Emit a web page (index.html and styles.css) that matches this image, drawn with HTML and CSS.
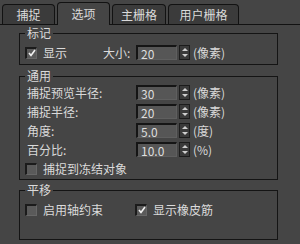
FILE: index.html
```html
<!DOCTYPE html>
<html lang="zh">
<head>
    <meta charset="utf-8" />
    <title>捕捉选项</title>
    <link rel="stylesheet" href="styles.css">
</head>
<body>
    <div class="tabs">
        <div class="tab">捕捉</div>
        <div class="tab active">选项</div>
        <div class="tab">主栅格</div>
        <div class="tab last">用户栅格</div>
    </div>

    <!-- 标记 -->
    <fieldset class="group g-mark">
        <legend>标记</legend>
        <div class="row">
            <label class="check wide-check"><span class="box"><svg width="8" height="8" viewBox="0 0 8 8"><path d="M1 4 L3 6.5 L7 1" fill="none" stroke="#f2f2f2" stroke-width="1.6"/></svg></span>显示</label>
            <span class="size-label">大小:</span>
            <span class="field">20</span>
            <span class="spin"><i class="up"></i><i class="down"></i></span>
            <span class="unit">(像素)</span>
        </div>
    </fieldset>

    <!-- 通用 -->
    <fieldset class="group g-common">
        <legend>通用</legend>
        <div class="rows">
            <div class="row">
                <span class="flabel">捕捉预览半径:</span>
                <span class="field">30</span>
                <span class="spin"><i class="up"></i><i class="down"></i></span>
                <span class="unit">(像素)</span>
            </div>
            <div class="row">
                <span class="flabel">捕捉半径:</span>
                <span class="field">20</span>
                <span class="spin"><i class="up"></i><i class="down"></i></span>
                <span class="unit">(像素)</span>
            </div>
            <div class="row">
                <span class="flabel">角度:</span>
                <span class="field">5.0</span>
                <span class="spin"><i class="up"></i><i class="down"></i></span>
                <span class="unit">(度)</span>
            </div>
            <div class="row">
                <span class="flabel">百分比:</span>
                <span class="field">10.0</span>
                <span class="spin"><i class="up"></i><i class="down"></i></span>
                <span class="unit">(%)</span>
            </div>
            <div class="row">
                <label class="check"><span class="box"></span>捕捉到冻结对象</label>
            </div>
        </div>
    </fieldset>

    <!-- 平移 -->
    <fieldset class="group g-move">
        <legend>平移</legend>
        <div class="row">
            <label class="check col-check"><span class="box"></span>启用轴约束</label>
            <label class="check"><span class="box"><svg width="8" height="8" viewBox="0 0 8 8"><path d="M1 4 L3 6.5 L7 1" fill="none" stroke="#f2f2f2" stroke-width="1.6"/></svg></span>显示橡皮筋</label>
        </div>
    </fieldset>
</body>
</html>
```

FILE: styles.css
```css
body {
    margin: 0;
    background: #454545;
    color: #dadada;
    font-family: "Noto Sans CJK SC", "Liberation Sans", sans-serif;
    font-size: 12px;
    line-height: 14px;
}

.tabs {
    display: flex;
    align-items: flex-end;
    gap: 2px;
    height: 24px;
    padding-left: 2px;
    border-bottom: 1px solid #121212;
}

.tab {
    box-sizing: border-box;
    height: 20px;
    min-width: 53px;
    padding: 0 8px;
    line-height: 19px;
    text-align: center;
    background: #3b3b3b;
    border: 1px solid #121212;
    border-bottom: none;
    border-radius: 4px 4px 0 0;
}

.tab.last {
    min-width: 71px;
}

.tab.active {
    height: 23px;
    margin-bottom: -1px;
    line-height: 21px;
    background: #454545;
}

.group {
    margin: 1px 22px 0 19px;
    padding: 5px 4px 4px 5px;
    border: 1px solid #141414;
    min-width: 0;
}

.group legend {
    padding: 0 2px;
    line-height: 14px;
}

.g-common {
    margin-top: 4px;
    padding-top: 2px;
    padding-bottom: 3px;
}

.g-move {
    margin-top: 3px;
    padding-bottom: 22px;
}

.rows {
    display: flex;
    flex-direction: column;
    gap: 4px;
}

.row {
    display: flex;
    align-items: center;
    height: 15px;
}

.flabel {
    width: 109px;
    padding-left: 2px;
}

.wide-check {
    width: 78px;
}

.col-check {
    width: 110px;
}

.size-label {
    width: 33px;
}

.check {
    display: flex;
    align-items: center;
}

.box {
    box-sizing: border-box;
    width: 12px;
    height: 12px;
    margin-right: 6px;
    display: flex;
    align-items: center;
    justify-content: center;
    background: #5a5a5a;
    border-top: 2px solid #1b1b1b;
    border-left: 2px solid #1b1b1b;
    border-right: 1px solid #676767;
    border-bottom: 1px solid #676767;
}

.field {
    box-sizing: border-box;
    width: 41px;
    height: 15px;
    padding-left: 3px;
    line-height: 13px;
    color: #dedede;
    background: #565656;
    border-top: 2px solid #151515;
    border-left: 2px solid #151515;
    border-right: 1px solid #5f5f5f;
    border-bottom: 1px solid #5f5f5f;
}

.spin {
    box-sizing: border-box;
    width: 11px;
    height: 15px;
    margin-left: 2px;
    display: flex;
    flex-direction: column;
    align-items: center;
    justify-content: space-around;
    background: #3a3a3a;
    border: 1px solid #1c1c1c;
}

.spin i {
    width: 0;
    height: 0;
    border-left: 3px solid transparent;
    border-right: 3px solid transparent;
}

.spin .up {
    border-bottom: 3px solid #cfcfcf;
}

.spin .down {
    border-top: 3px solid #cfcfcf;
}

.unit {
    margin-left: 3px;
}
```
